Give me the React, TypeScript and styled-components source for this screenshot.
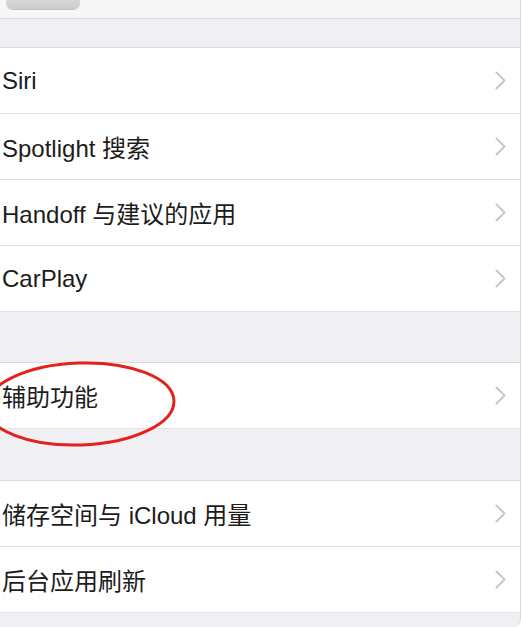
import styled, { createGlobalStyle } from "styled-components";

const GlobalStyle = createGlobalStyle`
  html, body {
    margin: 0;
    padding: 0;
    background: #ffffff;
  }
  * {
    box-sizing: border-box;
  }
`;

interface Item {
  label: string;
  circled?: boolean;
}

const groups: { gap: number; items: Item[] }[] = [
  {
    gap: 28,
    items: [
      { label: "Siri" },
      { label: "Spotlight 搜索" },
      { label: "Handoff 与建议的应用" },
      { label: "CarPlay" },
    ],
  },
  { gap: 50, items: [{ label: "辅助功能", circled: true }] },
  {
    gap: 51,
    items: [{ label: "储存空间与 iCloud 用量" }, { label: "后台应用刷新" }],
  },
];

const Chevron = () => (
  <ChevronIcon width="11" height="19" viewBox="0 0 11 19">
    <polyline
      points="1.5,1.5 9.5,9.5 1.5,17.5"
      fill="none"
      stroke="#c6c6cb"
      strokeWidth="2"
      strokeLinecap="round"
      strokeLinejoin="round"
    />
  </ChevronIcon>
);

const Circle = () => (
  <Annotation width="200" height="92" viewBox="0 0 200 92">
    <ellipse
      cx="96"
      cy="45"
      rx="94"
      ry="41"
      fill="none"
      stroke="#e3221d"
      strokeWidth="3"
      transform="rotate(-2 96 45)"
    />
  </Annotation>
);

const App = () => {
  return (
    <Page>
      <GlobalStyle />
      <NavBar>
        <BackButton />
        <Title>通用</Title>
        <span />
      </NavBar>
      {groups.map((group, gi) => (
        <Group key={gi} gap={group.gap}>
          {group.items.map((item) => (
            <Row key={item.label}>
              <Label>{item.label}</Label>
              <Chevron />
              {item.circled && <Circle />}
            </Row>
          ))}
        </Group>
      ))}
    </Page>
  );
};

const Page = styled.div`
  width: 521px;
  height: 627px;
  overflow: hidden;
  background: #efeff4;
  border-right: 1px solid #dcdce0;
  border-bottom-right-radius: 8px;
  font-family: "Liberation Sans", "Noto Sans CJK SC", sans-serif;
`;

const NavBar = styled.div`
  display: grid;
  grid-template-columns: 1fr auto 1fr;
  align-items: start;
  height: 19px;
  overflow: hidden;
  background: #f7f7f7;
  border-bottom: 1px solid #d8d8dc;
`;

const BackButton = styled.div`
  width: 74px;
  height: 30px;
  margin: -21px 0 0 6px;
  border-radius: 7px;
  background: linear-gradient(#e4e4e4, #d7d7d7 70%, #cbcbcb);
  box-shadow: 0 1px 0 #c2c2c2;
`;

const Title = styled.div`
  margin-top: -22px;
  font-size: 24px;
  line-height: 24px;
  color: #dadada;
`;

const Group = styled.div<{ gap: number }>`
  margin-top: ${({ gap }) => gap}px;
  background: #ffffff;
  border-top: 1px solid #dcdcdf;
`;

const Row = styled.div`
  position: relative;
  display: flex;
  align-items: center;
  justify-content: space-between;
  height: 66px;
  padding: 0 14px 0 2px;
  border-bottom: 1px solid #e2e2e5;
`;

const Label = styled.span`
  font-size: 24px;
  color: #1c1c1c;
  white-space: nowrap;
`;

const ChevronIcon = styled.svg`
  flex-shrink: 0;
`;

const Annotation = styled.svg`
  position: absolute;
  left: -16px;
  top: -4px;
  pointer-events: none;
`;

export default App;
